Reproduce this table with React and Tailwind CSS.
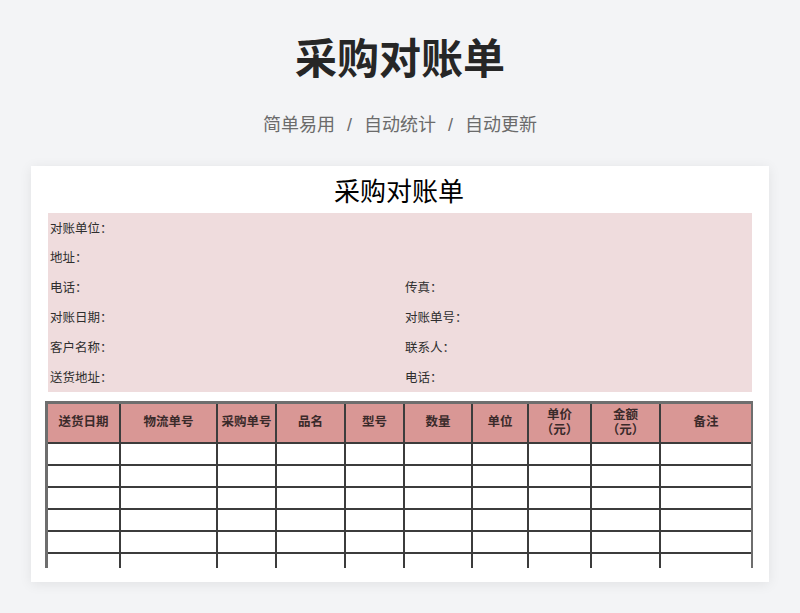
import React from "react";

const FONT = { fontFamily: '"Liberation Sans", "Noto Sans CJK SC", sans-serif' };
const SERIF = { fontFamily: '"Liberation Serif", "Noto Sans CJK SC", serif' };

const columns = [
  { label: "送货日期", w: "w-[73px]" },
  { label: "物流单号", w: "w-[97px]" },
  { label: "采购单号", w: "w-[59px]" },
  { label: "品名", w: "w-[69px]" },
  { label: "型号", w: "w-[59px]" },
  { label: "数量", w: "w-[68px]" },
  { label: "单位", w: "w-[56px]" },
  { label: "单价", sub: "（元）", w: "w-[63px]" },
  { label: "金额", sub: "（元）", w: "w-[69px]" },
  { label: "备注", w: "w-[90px]", last: true },
];

const infoRows = [
  ["对账单位：", ""],
  ["地址：", ""],
  ["电话：", "传真："],
  ["对账日期：", "对账单号："],
  ["客户名称：", "联系人："],
  ["送货地址：", "电话："],
];

export default function App() {
  return (
    <main
      className="w-[800px] h-[613px] bg-[#f3f4f6] overflow-hidden flex flex-col items-center"
      style={FONT}
    >
      {/* Header */}
      <h1 className="mt-[33px] h-[54px] leading-[54px] text-[42px] font-bold text-[#262626]">
        采购对账单
      </h1>
      <p className="mt-[26px] h-[24px] leading-[24px] text-[18px] text-[#6b6b6b] flex gap-[12px]">
        <span>简单易用</span>
        <span>/</span>
        <span>自动统计</span>
        <span>/</span>
        <span>自动更新</span>
      </p>

      {/* Sheet card */}
      <section className="mt-[29px] w-[738px] h-[416px] bg-white shadow-[0_2px_12px_rgba(0,0,0,0.08)] pl-[14px] pr-[16px] overflow-hidden">
        <h2 className="h-[47px] flex items-center justify-center pt-[6px] text-[26px] text-black">
          采购对账单
        </h2>

        <div className="ml-[3px] mr-[1px] bg-[#efdcdd] text-[12.5px] text-[#2e2e2e]" style={SERIF}>
          {infoRows.map(([l, r], i) => (
            <div key={i} className="h-[29.8px] flex items-center pt-[2px]">
              <span className="w-[357px] pl-[2px]">{l}</span>
              <span>{r}</span>
            </div>
          ))}
        </div>

        {/* Table */}
        <div className="mt-[9px] h-[167px] overflow-hidden">
          <div className="border-t-[3px] border-l-[3px] border-r-[2px] border-[#6e6e6e] w-[708px]">
            <div className="flex h-[40px] bg-[#d99795] border-b-2 border-[#3c3c3c]">
              {columns.map((c) => (
                <div
                  key={c.label}
                  className={`${c.w} shrink-0 flex flex-col items-center justify-center text-[12.5px] font-bold text-[#3a2a2a] leading-[15px] ${
                    c.last ? "" : "border-r-2 border-[#3c3c3c]"
                  }`}
                >
                  <span>{c.label}</span>
                  {c.sub && <span>{c.sub}</span>}
                </div>
              ))}
            </div>
            {[0, 1, 2, 3, 4, 5].map((r) => (
              <div key={r} className="flex h-[22px] border-b-2 border-[#3c3c3c]">
                {columns.map((c) => (
                  <div
                    key={c.label}
                    className={`${c.w} shrink-0 ${c.last ? "" : "border-r-2 border-[#3c3c3c]"}`}
                  />
                ))}
              </div>
            ))}
          </div>
        </div>
      </section>
    </main>
  );
}
